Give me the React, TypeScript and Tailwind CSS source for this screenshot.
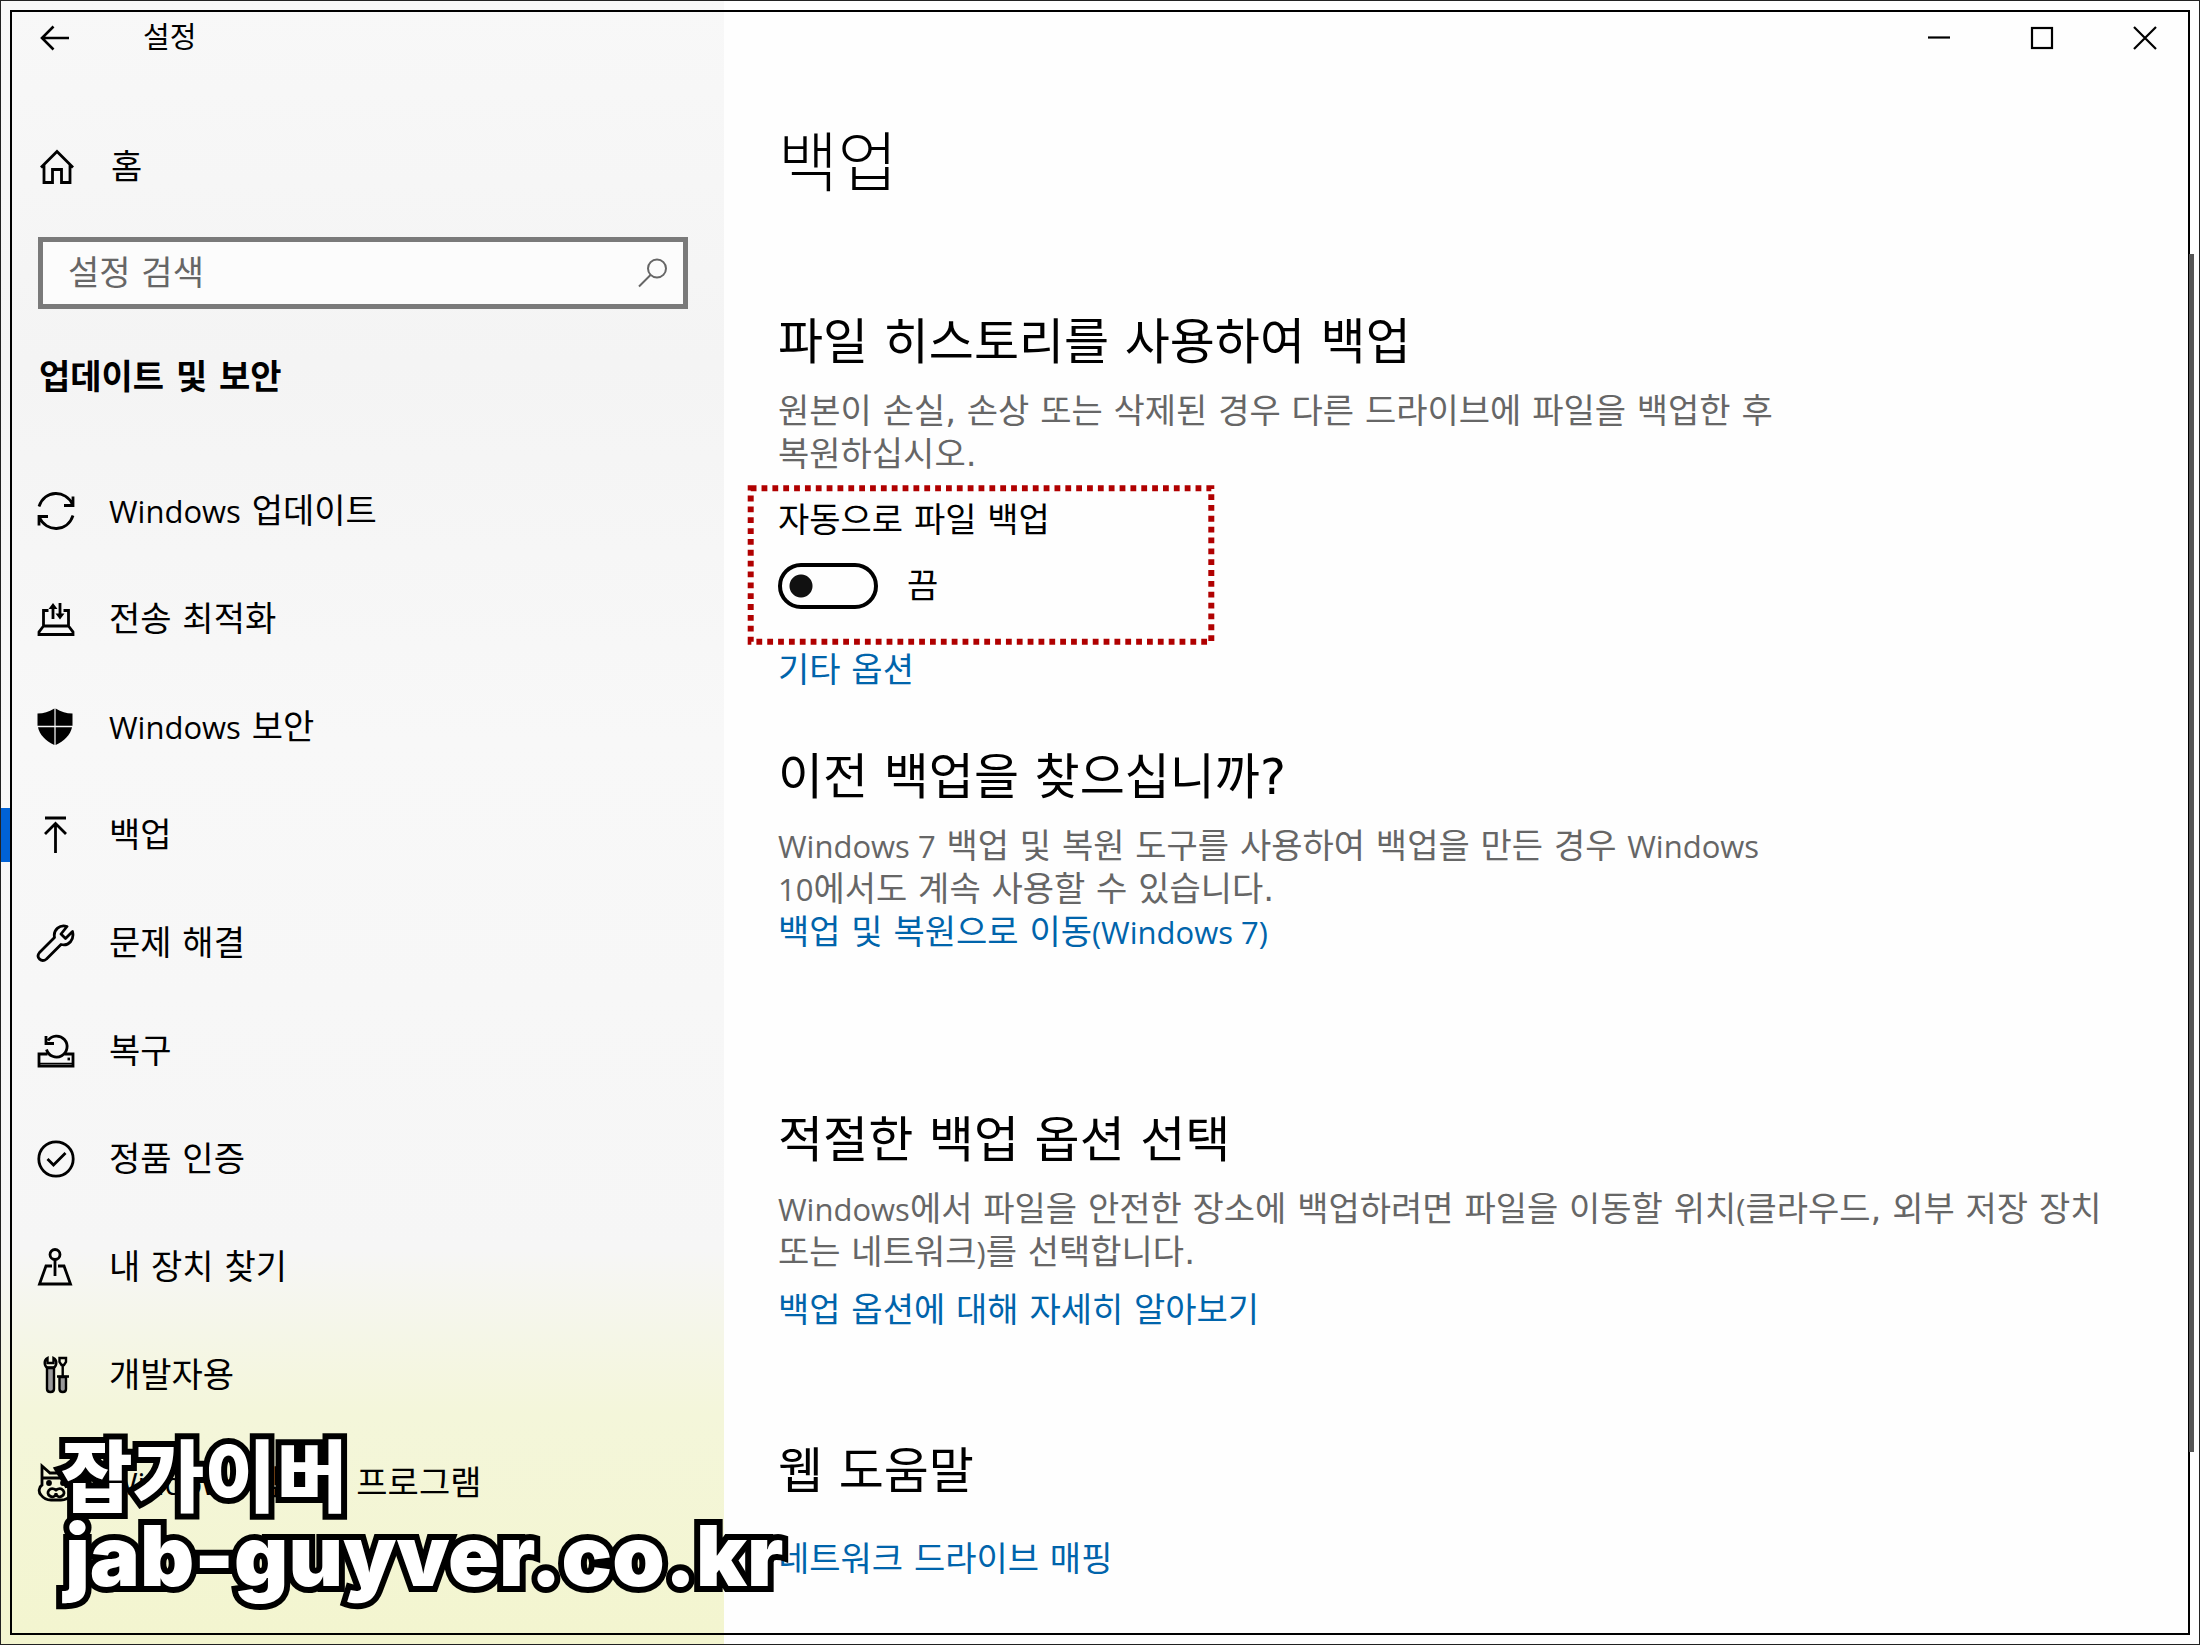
import { useState } from 'react';
import type { ReactNode } from 'react';

interface NavEntry {
  id: string;
  label: ReactNode;
  icon: ReactNode;
}

// Latin runs sit a little smaller than the Hangul beside them
function Latin({ children }: { children: ReactNode }) {
  return <span className="font-['Open_Sans','Noto_Sans_CJK_KR',sans-serif] text-[31px]">{children}</span>;
}

function Icon({ children }: { children: ReactNode }) {
  return (
    <svg
      viewBox="0 0 40 40"
      className="h-10 w-10 shrink-0"
      fill="none"
      stroke="currentColor"
      strokeWidth="2.8"
      aria-hidden="true"
    >
      {children}
    </svg>
  );
}

const HomeIcon = () => (
  <Icon>
    <path d="M4 20.5 20 4.5 36 20.5M7 18v17.5h8.5v-13h9v13H33V18" />
  </Icon>
);

const NAV_ITEMS: NavEntry[] = [
  {
    id: 'update',
    label: <><Latin>Windows</Latin> 업데이트</>,
    icon: (
      <Icon>
        <path d="M3 15.5C8.5-1.5 30-1.5 36.5 13.5M37 24.5C31.5 41.5 10 41.5 3.5 26.5M37 5.5v9H28M3 34.5v-9h9" />
      </Icon>
    ),
  },
  {
    id: 'delivery',
    label: '전송 최적화',
    icon: (
      <Icon>
        <path d="M12.5 11.5h-5V27h25V11.5h-5M7.5 27 3 33v2.5h34V33L32.5 27M17 20V8M24 4v12" />
        <path d="M12.5 10 17 4l4.5 6zM19.5 14.5h9L24 20.5z" fill="currentColor" stroke="none" />
      </Icon>
    ),
  },
  {
    id: 'security',
    label: <><Latin>Windows</Latin> 보안</>,
    icon: (
      <Icon>
        <g fill="currentColor" stroke="none">
          <path d="M18.4 1.5v17.2H1.5V6.5C8 6.5 12.5 5 18.4 1.5z" />
          <path d="M19.6 1.5v17.2h16.9V6.5C30 6.5 25.5 5 19.6 1.5z" />
          <path d="M18.4 20.2V38C10 34 3.5 28 2 20.2z" />
          <path d="M19.6 20.2V38C28 34 34.5 28 36 20.2z" />
        </g>
      </Icon>
    ),
  },
  {
    id: 'backup',
    label: '백업',
    icon: (
      <Icon>
        <path d="M9 3h21M19.5 38V8.5M9 19 19.5 8.5 30 19" />
      </Icon>
    ),
  },
  {
    id: 'troubleshoot',
    label: '문제 해결',
    icon: (
      <Icon>
        <path
          d="M31 3.5c-7-2.5-14 3-12.5 11L3.5 29.5c-4 5 2 10.5 7 6.5L25 21.5c8 2 13.5-5 11.5-13l-7 7-4.5-4.5z"
          strokeLinejoin="round"
        />
      </Icon>
    ),
  },
  {
    id: 'recovery',
    label: '복구',
    icon: (
      <Icon>
        <path d="M11.5 23H3v12h34V23h-8.5" />
        <path d="M10.5 18.5A10.5 10.5 0 1 0 12 9.5M10 5v7.5h8" />
        <path d="M31.5 28H34" />
        <path d="M3 32.5h34" strokeWidth="1.5" />
      </Icon>
    ),
  },
  {
    id: 'activation',
    label: '정품 인증',
    icon: (
      <Icon>
        <circle cx="20" cy="20" r="17.2" />
        <path d="m11.5 20 6 6 12-12" />
      </Icon>
    ),
  },
  {
    id: 'find-device',
    label: '내 장치 찾기',
    icon: (
      <Icon>
        <circle cx="19" cy="7.5" r="5" />
        <path d="M19 12.5V29M16 19h-6L3.5 37h31L28 19h-6" />
      </Icon>
    ),
  },
  {
    id: 'developers',
    label: '개발자용',
    icon: (
      <Icon>
        <g strokeWidth="2.4">
          <path d="M11 12.5V34c0 4 7 4 7 0V12.5z" fill="#999" />
          <path d="M23.5 22v12c0 4 6.5 4 6.5 0V22z" fill="#999" />
          <path d="M11.5 3c-4 2-3.5 8 0 10h6c3.5-2 4-8 0-10v5h-6zM23.5 3H30v4l-2 3h-2.5l-2-3zM26.7 10v12M21 21.5h12" />
        </g>
      </Icon>
    ),
  },
  {
    id: 'insider',
    label: <><Latin>Windows</Latin> 참가자 프로그램</>,
    icon: (
      <Icon>
        <path d="M6 15V3l8 7h13l8-7v12M5 15h31M6 15v7c-3 2-4 7-1 10 3 4 7 5 10 5h10c3 0 7-1 10-5 3-3 2-8-1-10v-7" />
        <circle cx="13" cy="20" r="1.5" fill="currentColor" />
        <circle cx="27" cy="20" r="1.5" fill="currentColor" />
        <path d="M20 27c-6-4-11 3-6 6 3 2 6 0 6-3 0 3 3 5 6 3 5-3 0-10-6-6z" />
      </Icon>
    ),
  },
];

function SectionTitle({ children }: { children: ReactNode }) {
  return <h2 className="text-[49px] leading-[64px] font-normal">{children}</h2>;
}

function TextLink({ children }: { children: ReactNode }) {
  return (
    <a href="#" className="self-start text-[#0064ab] hover:text-gray-500">
      {children}
    </a>
  );
}

function Sidebar() {
  const [active, setActive] = useState('backup');

  return (
    <aside className="w-[723px] shrink-0 bg-[linear-gradient(180deg,#f8f8f8_0%,#f4f4f4_22%,#f8f8f8_45%,#f6f6f6_76%,#f4f6da_86%,#f3f5cf_100%)]">
      <header className="flex h-[74px] items-center gap-[70px] pl-[36px]">
        <button type="button" aria-label="뒤로" className="flex">
          <svg viewBox="0 0 36 36" className="h-9 w-9" fill="none" stroke="currentColor" strokeWidth="2.6">
            <path d="M32 18H5M16.5 6.5 5 18l11.5 11.5" />
          </svg>
        </button>
        <span className="text-[29px]">설정</span>
      </header>

      <a href="#" className="mt-[58px] flex h-[68px] items-center gap-[34px] pl-[36px]">
        <HomeIcon />
        홈
      </a>

      <label className="mt-[36px] mr-[36px] ml-[37px] flex h-[72px] items-center border-[5px] border-[#7a7a7a] bg-[#fcfcfc] pr-[14px] pl-[25px]">
        <input
          type="search"
          aria-label="설정 검색"
          placeholder="설정 검색"
          className="min-w-0 flex-1 bg-transparent outline-none placeholder:text-[#666]"
        />
        <svg viewBox="0 0 32 32" className="h-8 w-8" fill="none" stroke="#666" strokeWidth="2" aria-hidden="true">
          <circle cx="20" cy="11.5" r="9" />
          <path d="M13.5 18 2 29.5" />
        </svg>
      </label>

      <h2 className="mt-[47px] pl-[38px] font-bold">업데이트 및 보안</h2>

      <nav className="mt-[58px]">
        {NAV_ITEMS.map((item) => (
          <button
            key={item.id}
            type="button"
            onClick={() => setActive(item.id)}
            className="flex h-[108px] w-full items-center"
          >
            <span className={item.id === active ? 'h-[54px] w-[9px] bg-[#0062d6]' : 'h-[54px] w-[9px]'} />
            <span className="ml-[26px] flex items-center gap-[33px]">
              {item.icon}
              <span>{item.label}</span>
            </span>
          </button>
        ))}
      </nav>
    </aside>
  );
}

function WindowControls() {
  return (
    <div className="flex h-[74px] items-center justify-end gap-[77px] pr-[41px]">
      <button type="button" aria-label="최소화">
        <svg viewBox="0 0 26 26" className="h-[26px] w-[26px]" stroke="currentColor" strokeWidth="2.2">
          <path d="M2 12.5h22" />
        </svg>
      </button>
      <button type="button" aria-label="최대화">
        <svg viewBox="0 0 26 26" className="h-[26px] w-[26px]" fill="none" stroke="currentColor" strokeWidth="2.2">
          <rect x="3" y="3" width="20" height="20" />
        </svg>
      </button>
      <button type="button" aria-label="닫기">
        <svg viewBox="0 0 26 26" className="h-[26px] w-[26px]" stroke="currentColor" strokeWidth="2.2">
          <path d="m2 2 22 22M24 2 2 24" />
        </svg>
      </button>
    </div>
  );
}

function AutoBackup() {
  const [enabled, setEnabled] = useState(false);

  return (
    <div className="relative -ml-[32px] h-[160px] w-[470px] pt-[14px] pl-[32px]">
      <svg className="absolute inset-0 h-full w-full" aria-hidden="true">
        <rect
          x="1%"
          y="2%"
          width="98%"
          height="96%"
          fill="none"
          stroke="#b00000"
          strokeWidth="6"
          strokeDasharray="5.8 5.05"
        />
      </svg>
      <p id="auto-backup">자동으로 파일 백업</p>
      <label className="mt-[21px] flex items-center gap-[29px]">
        <input
          type="checkbox"
          role="switch"
          aria-labelledby="auto-backup"
          checked={enabled}
          onChange={(e) => setEnabled(e.target.checked)}
          className="h-[46px] w-[100px] appearance-none rounded-full border-4 border-black bg-[radial-gradient(circle_at_19px_50%,#111_11px,transparent_12px)] checked:bg-[radial-gradient(circle_at_74px_50%,#111_11px,transparent_12px)]"
        />
        <span>{enabled ? '켬' : '끔'}</span>
      </label>
    </div>
  );
}

export default function App() {
  return (
    <div className="relative flex min-h-screen overflow-hidden border border-[#222] bg-[#fefefe] font-['DejaVu_Sans','Noto_Sans_CJK_KR',sans-serif] text-[34px] leading-[43px] break-keep text-black">
      <Sidebar />

      <main className="min-w-0 flex-1">
        <WindowControls />

        <div className="flex flex-col pl-[54px]">
          <h1 className="mt-[41px] text-[65px] leading-[96px] font-light">백업</h1>

          <section className="mt-[99px] flex flex-col">
            <SectionTitle>파일 히스토리를 사용하여 백업</SectionTitle>
            <p className="mt-[15px] max-w-[1040px] text-[#666]">
              원본이 손실, 손상 또는 삭제된 경우 다른 드라이브에 파일을 백업한 후 복원하십시오.
            </p>
            <div className="mt-[9px] mb-1">
              <AutoBackup />
            </div>
            <TextLink>기타 옵션</TextLink>
          </section>

          <section className="mt-[54px] flex flex-col">
            <SectionTitle>이전 백업을 찾으십니까?</SectionTitle>
            <p className="mt-[15px] max-w-[1040px] text-[#666]">
              <Latin>Windows 7</Latin> 백업 및 복원 도구를 사용하여 백업을 만든 경우 <Latin>Windows 10</Latin>에서도 계속
              사용할 수 있습니다.
            </p>
            <TextLink>
              백업 및 복원으로 이동<Latin>(Windows 7)</Latin>
            </TextLink>
          </section>

          <section className="mt-[155px] flex flex-col">
            <SectionTitle>적절한 백업 옵션 선택</SectionTitle>
            <p className="mt-[15px] mb-[15px] max-w-[1360px] text-[#666]">
              <Latin>Windows</Latin>에서 파일을 안전한 장소에 백업하려면 파일을 이동할 위치<Latin>(</Latin>클라우드, 외부
              저장 장치 또는 네트워크<Latin>)</Latin>를 선택합니다.
            </p>
            <TextLink>백업 옵션에 대해 자세히 알아보기</TextLink>
          </section>

          <section className="mt-[108px] flex flex-col gap-[34px]">
            <SectionTitle>웹 도움말</SectionTitle>
            <TextLink>네트워크 드라이브 매핑</TextLink>
          </section>
        </div>
      </main>

      {/* Window outline and scrollbar */}
      <div className="pointer-events-none absolute inset-[9px] border-2 border-black" />
      <div className="absolute top-[253px] right-[5px] h-[1198px] w-[5px] bg-[#555]" />

      {/* Watermark */}
      <div className="pointer-events-none absolute bottom-[48px] left-[60px] font-black text-white [-webkit-text-stroke:12px_black] [paint-order:stroke_fill]">
        <p className="font-['Noto_Sans_CJK_KR',sans-serif] text-[78px] leading-[88px]">잡가이버</p>
        <p className="pl-1 font-['Inter',sans-serif] text-[84px] leading-[80px]">jab-guyver.co.kr</p>
      </div>
    </div>
  );
}
